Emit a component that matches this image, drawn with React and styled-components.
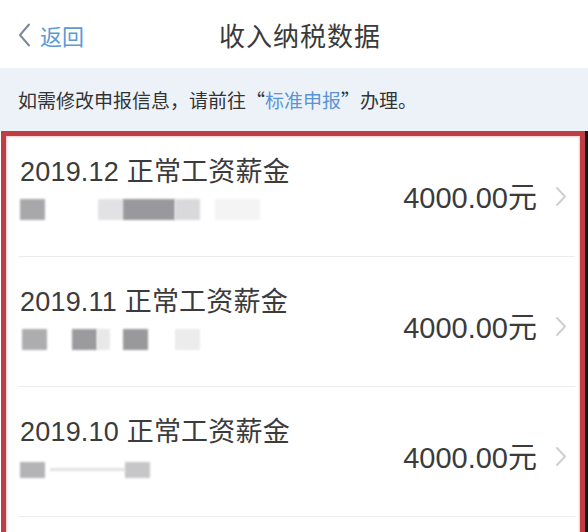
import React from "react";
import styled, { createGlobalStyle } from "styled-components";

const Global = createGlobalStyle`
  html, body {
    margin: 0;
    padding: 0;
    background: #ffffff;
  }
  body {
    font-family: "Liberation Sans", "Noto Sans CJK SC", sans-serif;
    color: #333;
  }
`;

const records = [
  {
    title: "2019.12 正常工资薪金",
    amount: "4000.00元",
    blocks: [
      { ml: 0, w: 25, c: "#a8a8ab" },
      { ml: 53, w: 25, c: "#e2e2e4" },
      { ml: 0, w: 52, c: "#98989d" },
      { ml: 0, w: 25, c: "#d9d9db" },
      { ml: 15, w: 45, c: "#f4f4f4" },
    ],
  },
  {
    title: "2019.11 正常工资薪金",
    amount: "4000.00元",
    blocks: [
      { ml: 2, w: 25, c: "#adadaf" },
      { ml: 25, w: 25, c: "#9b9b9e" },
      { ml: 0, w: 13, c: "#e8e8e8" },
      { ml: 13, w: 25, c: "#99999c" },
      { ml: 27, w: 25, c: "#ececec" },
    ],
  },
  {
    title: "2019.10 正常工资薪金",
    amount: "4000.00元",
    blocks: [
      { ml: 0, w: 25, c: "#b4b4b6", h: 16 },
      { ml: 5, w: 75, c: "#e2e2e2", h: 3 },
      { ml: 0, w: 25, c: "#c6c6c8", h: 16 },
    ],
  },
];

function App() {
  return (
    <Screen>
      <Global />
      <NavBar>
        <Back>
          <svg width="13" height="24" viewBox="0 0 13 24">
            <polyline
              points="11,1.5 2,12 11,22.5"
              fill="none"
              stroke="#7d889a"
              strokeWidth="2"
              strokeLinecap="round"
              strokeLinejoin="round"
            />
          </svg>
          <BackText>返回</BackText>
        </Back>
        <Title>收入纳税数据</Title>
        <span />
      </NavBar>

      <Notice>
        如需修改申报信息，请前往“<NoticeLink>标准申报</NoticeLink>”办理。
      </Notice>

      <Highlight>
        {records.map((r, i) => (
          <Row key={r.title} $compact={i === 0}>
            <Info>
              <RowTitle>{r.title}</RowTitle>
              <Masked>
                {r.blocks.map((b, j) => (
                  <Smudge key={j} $ml={b.ml} $w={b.w} $c={b.c} $h={b.h || 21} />
                ))}
              </Masked>
            </Info>
            <Amount>{r.amount}</Amount>
            <Arrow>
              <svg width="12" height="21" viewBox="0 0 12 21">
                <polyline
                  points="2,2 10,10.5 2,19"
                  fill="none"
                  stroke="#cfcfd1"
                  strokeWidth="2"
                  strokeLinecap="round"
                  strokeLinejoin="round"
                />
              </svg>
            </Arrow>
          </Row>
        ))}
      </Highlight>
    </Screen>
  );
}

const Screen = styled.div`
  width: 588px;
  height: 532px;
  overflow: hidden;
  background: #fff;
`;

const NavBar = styled.div`
  height: 68px;
  display: grid;
  grid-template-columns: 1fr auto 1fr;
  align-items: center;
  padding: 0 18px;
  box-sizing: border-box;
`;

const Back = styled.div`
  display: flex;
  align-items: center;
  gap: 9px;
  margin-top: 2px;
`;

const BackText = styled.span`
  font-size: 22px;
  color: #5c9ad6;
`;

const Title = styled.div`
  font-size: 26px;
  color: #3a3a3a;
  letter-spacing: 1px;
  padding-left: 12px;
`;

const Notice = styled.div`
  height: 63px;
  display: flex;
  align-items: center;
  padding-left: 18px;
  background: #edf2f9;
  font-family: "Noto Sans CJK SC", sans-serif;
  font-size: 19px;
  color: #333;
`;

const NoticeLink = styled.span`
  color: #5a94d4;
`;

const Highlight = styled.div`
  margin: 0 3px 0 1px;
  border: 5px solid #bf3d45;
  border-bottom: none;
  box-shadow: 3px 0 0 #161616, inset 0 0 2px 1px rgba(235, 160, 165, 0.6);
  height: 400px;
`;

const Row = styled.div`
  display: grid;
  grid-template-columns: 1fr auto auto;
  align-items: start;
  margin: 0 5px 0 12px;
  padding: ${(p) => (p.$compact ? "20px" : "29px")} 8px 36px 2px;
  border-bottom: 1px solid #ececee;
`;

const Info = styled.div`
  display: flex;
  flex-direction: column;
  gap: 11px;
`;

const RowTitle = styled.div`
  font-size: 27px;
  line-height: 32px;
  color: #3b3b3b;
  letter-spacing: 0.2px;
`;

const Masked = styled.div`
  display: flex;
  align-items: center;
  height: 21px;
`;

const Smudge = styled.div`
  margin-left: ${(p) => p.$ml}px;
  width: ${(p) => p.$w}px;
  height: ${(p) => p.$h}px;
  background: ${(p) => p.$c};
  filter: blur(1.2px);
`;

const Amount = styled.div`
  font-size: 29px;
  line-height: 34px;
  color: #3b3b3b;
  margin-top: 25px;
`;

const Arrow = styled.div`
  margin: 30px 0 0 18px;
  display: flex;
`;

export default App;
